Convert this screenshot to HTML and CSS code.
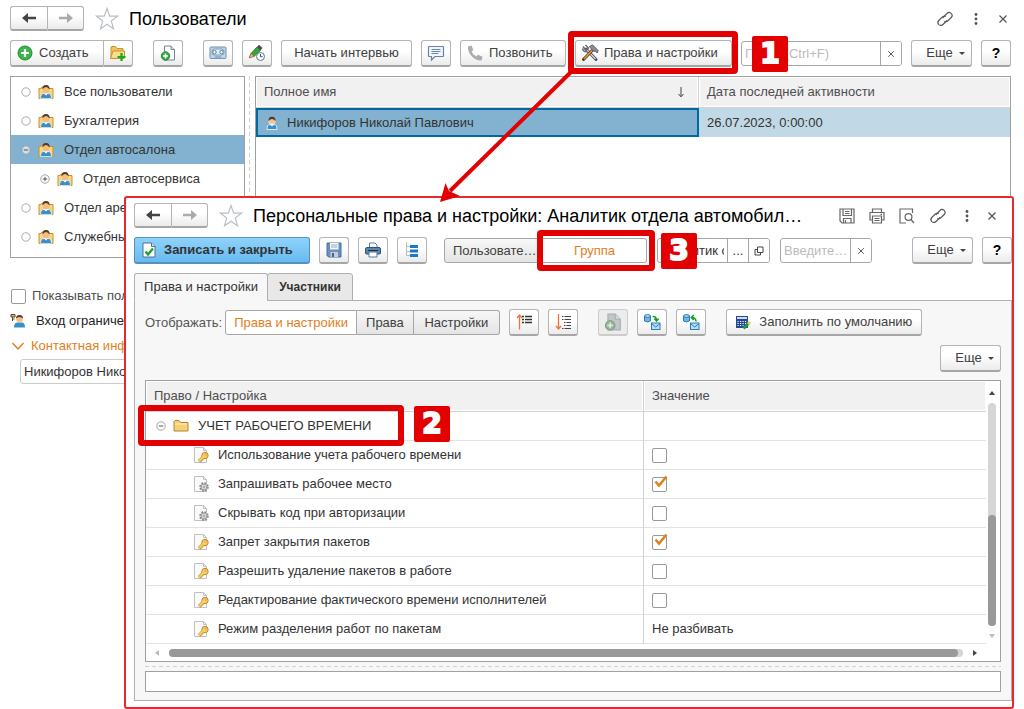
FILE: index.html
```html
<!DOCTYPE html>
<html lang="ru">
<head>
<meta charset="utf-8">
<title>Пользователи</title>
<link rel="stylesheet" href="styles.css">
</head>
<body>
<svg class="sprite" aria-hidden="true">
  <symbol id="i-back" viewBox="0 0 16 12"><path d="M1 6 7 1v3.700h8v2.600H7V11z" fill="currentColor"/></symbol>
  <symbol id="i-fwd" viewBox="0 0 16 12"><path d="M15 6 9 1v3.700H1v2.600h8V11z" fill="currentColor"/></symbol>
  <symbol id="i-star" viewBox="0 0 24 24"><path d="M12 1.500 14.700 9.200H22.500L16.300 14l2.200 7.700L12 17.200l-6.500 4.500L7.700 14 1.500 9.200h7.800z" fill="#fff" stroke="#b9c0c6" stroke-width="1.200"/></symbol>
  <symbol id="i-link" viewBox="0 0 18 18"><g fill="none" stroke="#555" stroke-width="1.200" stroke-linecap="round"><path d="M7 7.500 11 3.500a2.800 2.800 0 0 1 4.200 4l-3.400 3.400a2.700 2.700 0 0 1-3 .6"/><path d="M11 10.500 7 14.500a2.800 2.800 0 0 1-4.200-4l3.400-3.400a2.700 2.700 0 0 1 3-.6" stroke-dasharray="9 1.500 20"/></g></symbol>
  <symbol id="i-dots" viewBox="0 0 4 14"><g fill="#555"><circle cx="2" cy="2.500" r="1.400"/><circle cx="2" cy="7" r="1.400"/><circle cx="2" cy="11.500" r="1.400"/></g></symbol>
  <symbol id="i-x" viewBox="0 0 10 10"><path d="m1.500 1.500 7 7m0-7-7 7" stroke="#555" stroke-width="1.200"/></symbol>
  <symbol id="i-add" viewBox="0 0 16 16"><circle cx="8" cy="8" r="7" fill="#39b54a" stroke="#1f8a36"/><path d="M8 4v8M4 8h8" stroke="#fff" stroke-width="2.200"/></symbol>
  <symbol id="i-folderadd" viewBox="0 0 18 16"><path d="M2 13.500V2.500q0-1 1-1h3.500l1.500 2h6v3" fill="#f3c260" stroke="#c99332"/><path d="M1.500 13.500 4 6h11.500v6l-.5 1.500z" fill="#fbdc8b" stroke="#c99332"/><path d="M12.500 8v8M8.500 12h8" stroke="#10b010" stroke-width="2.200"/></symbol>
  <symbol id="i-docadd" viewBox="0 0 16 16"><path d="M4.500 1H11l3.500 3.500V15h-10z" fill="#fff" stroke="#73859b"/><path d="M11 1v3.500h3.500" fill="#dce5ee" stroke="#73859b"/><circle cx="5.500" cy="11" r="4.200" fill="#39a84a" stroke="#1f8a36"/><path d="M5.500 8.500v5M3 11h5" stroke="#fff" stroke-width="1.500"/></symbol>
  <symbol id="i-docadd-off" viewBox="0 0 16 16"><path d="M3.500 1H10l4.500 4.500V15h-11z" fill="#c3c6c8" stroke="#a9adb0"/><path d="M10 1v4.500h4.500" fill="#dadcdd" stroke="#a9adb0"/><circle cx="5.500" cy="11" r="4.200" fill="#96b29a" stroke="#86a38a"/><path d="M5.500 8.500v5M3 11h5" stroke="#dfe8e0" stroke-width="1.500"/></symbol>
  <symbol id="i-tape" viewBox="0 0 18 14"><rect x="1" y="1" width="16" height="11.500" rx="1" fill="#bcd7ec" stroke="#7492ae"/><rect x="3" y="3" width="12" height="6" rx="2.500" fill="#e1eef8" stroke="#7b9bb5"/><circle cx="5.500" cy="6.200" r="1.700" fill="#fff" stroke="#5c7d9a"/><circle cx="12.500" cy="6.200" r="1.700" fill="#fff" stroke="#5c7d9a"/><path d="M5 12.300 6.500 10h5l1.500 2.300" fill="#8fb2d0"/></symbol>
  <symbol id="i-pencil" viewBox="0 0 18 18"><path d="M1.500 13.500 3 9.500 9 3l3.500 3.500L6.500 12z" fill="#36a53a" stroke="#1e7428" stroke-width=".8"/><path d="m9 3 2-2.200L14.500 4l-2 2.300z" fill="#434a56"/><path d="m1.300 14 1.600-4.400L6.400 12.300z" fill="#f0bd74" stroke="#8d5b26" stroke-width=".6"/><circle cx="12.500" cy="12.500" r="4" fill="#fff" stroke="#5a7690"/><path d="M12.500 10v2.700h2.200" fill="none" stroke="#33526e"/></symbol>
  <symbol id="i-chat" viewBox="0 0 18 16"><path d="M2 1.500h14q.5 0 .5.500v9q0 .5-.5.500H8L4.500 15v-3.500H2q-.5 0-.5-.5V2q0-.5.500-.5z" fill="#f1f7fc" stroke="#6684a3" stroke-width="1.200"/><path d="M4.500 4.500h9M4.500 6.500h9M4.500 8.500h7" stroke="#6d87a0"/></symbol>
  <symbol id="i-phone" viewBox="0 0 16 16"><path d="M1 1.500 4.500.5 6.300 5 4.500 6.500q1.300 3.300 4.700 5L11 9.700l4.500 2-.8 3.600Q9.500 16 5 11.500T1 1.500z" fill="#adadad"/></symbol>
  <symbol id="i-tools" viewBox="0 0 18 18"><path d="M5 5 15 15.500" stroke="#4b4b55" stroke-width="3" stroke-linecap="round"/><path d="m5.500 5.500 9 9.500" stroke="#d3d6dd" stroke-width="1.300"/><path d="M2 2.500 5 6.500 7.500 4 4.500 1M1.500 4.500q1 4 4.500 3" fill="none" stroke="#6c6c78" stroke-width="1.500"/><path d="M2.500 15.500 12 5.500" stroke="#5a3617" stroke-width="3" stroke-linecap="round"/><path d="m3 15 8.500-9" stroke="#e09a4b" stroke-width="1.500"/><path d="M8.500 2.500 11.500.8l5.700 5.700-1 2.500-2-2-1.500.5L10 4.500z" fill="#8d8d9b" stroke="#4a4a55" stroke-width=".8"/></symbol>
  <symbol id="i-group" viewBox="0 0 16 16"><path d="M1 14.500v-10h2l1-1.500h3l1 1.500h7v10z" fill="#f9d587" stroke="#c98f30"/><path d="M2.500 14.500q0-5 3.500-5h4q3.500 0 3.500 5z" fill="#3990c8" stroke="#f4f9fc" stroke-width=".7"/><path d="m6 9.500 2 2 2-2z" fill="#fff"/><circle cx="8" cy="6" r="3.200" fill="#f3bd7c"/><path d="M4.500 5.500Q4 1 8 1q4 0 3.500 4.500Q10 3 8 3T4.500 5.500z" fill="#513a2b"/></symbol>
  <symbol id="i-user" viewBox="0 0 12 14"><path d="M1 13.500Q1 8.500 4 8.500h4q3 0 3 5z" fill="#3990c8" stroke="#e9f4fb" stroke-width=".9"/><path d="m4 8.500 2 2 2-2z" fill="#fff"/><circle cx="6" cy="5" r="3.300" fill="#f3c185" stroke="#e9f4fb" stroke-width=".8"/><path d="M2.500 5.500Q2 1 6 .8q4 .2 3.500 4.700Q8.500 3 6 3T2.500 5.500z" fill="#513a2b"/></symbol>
  <symbol id="i-login" viewBox="0 0 16 16"><path d="M4 14.500q0-5 3.500-5h4q3.500 0 3.500 5z" fill="#3990c8"/><circle cx="9.500" cy="6" r="3.300" fill="#f3c185"/><path d="M6 5.500Q6 2 9.500 2T13 5.500Q11.500 4 9.500 4T6 5.500z" fill="#513a2b"/><path d="M1 1.500h4v2.500H1zM2.500 4v4M2 6h2.500" fill="#d4b872" stroke="#5b4928"/></symbol>
  <symbol id="i-minus" viewBox="0 0 10 10"><circle cx="5" cy="5" r="4.200" fill="#fff" fill-opacity=".6" stroke="#999" stroke-width=".9"/><path d="M2.800 5h4.400" stroke="#555"/></symbol>
  <symbol id="i-plus" viewBox="0 0 10 10"><circle cx="5" cy="5" r="4.200" fill="#fff" stroke="#999" stroke-width=".9"/><path d="M2.800 5h4.400M5 2.800v4.400" stroke="#555"/></symbol>
  <symbol id="i-dot" viewBox="0 0 10 10"><circle cx="5" cy="5" r="4.200" fill="#fff" stroke="#aaa"/></symbol>
  <symbol id="i-savedoc" viewBox="0 0 14 16"><path d="M1 1h8.500L13 4.500V15H1z" fill="#fff" stroke="#4f7391"/><path d="M9.500 1v3.500H13" fill="#d5e4f0" stroke="#4f7391"/><path d="m3.500 9.500 2.500 3 5-6" fill="none" stroke="#18a32c" stroke-width="2.300"/></symbol>
  <symbol id="i-floppy" viewBox="0 0 16 16"><path d="M1 1h14v14H2.500L1 13.500z" fill="#6a90bd" stroke="#4a6f9c"/><path d="M4 1h8.500v6.500H4z" fill="#f4f8fc"/><path d="M5 3h6.500M5 5h6.500" stroke="#94aac2"/><path d="M4.500 10h7.500v5H4.500z" fill="#c6cdd6"/><path d="M6 11h2v4H6z" fill="#3f6491"/></symbol>
  <symbol id="i-printer" viewBox="0 0 16 16"><path d="M4.500 6V1h5.500l2 2v3" fill="#fff" stroke="#5d7a95"/><path d="M2 5.500h12q1.500 0 1.500 1.500v4q0 1-1 1h-13q-1 0-1-1V7Q.5 5.500 2 5.500z" fill="#5d86ac" stroke="#2e5478"/><path d="M3 8.500h10" stroke="#163452"/><path d="M4 10h8v5H4z" fill="#fff" stroke="#5d7a95"/></symbol>
  <symbol id="i-tree" viewBox="0 0 14 16"><path d="M1.500 0v13.500H5M1.500 4.500H5M1.500 9.500H5" fill="none" stroke="#b3bec8"/><g fill="#1c78c8"><rect x="5" y="3" width="8" height="3"/><rect x="5" y="7.500" width="8" height="3"/><rect x="5" y="12" width="8" height="3"/></g></symbol>
  <symbol id="i-osave" viewBox="0 0 16 16"><g fill="none" stroke="#666" stroke-width="1.200"><path d="M1 1h14v14H3l-2-2zM4 1v6.500h8.500V1M6 3.500h4.500M6 5.500h4.500M4.500 15v-4.500H12V15"/><path d="M6.500 12v3"/></g></symbol>
  <symbol id="i-oprint" viewBox="0 0 16 16"><g fill="none" stroke="#666" stroke-width="1.200"><path d="M3.500 4V1h9v3M3.500 12H1V4.500h14V12h-2.500"/><path d="M3.500 8h9v7h-9zM5.500 10.500h5M5.500 12.500h5M11.500 6.300h1.500"/></g></symbol>
  <symbol id="i-opreview" viewBox="0 0 16 16"><g fill="none" stroke="#666" stroke-width="1.200"><path d="M7 15H1V1h12.500v4"/><circle cx="9.500" cy="9" r="3.400"/><path d="m12 11.500 3 3.500"/></g></symbol>
  <symbol id="i-open" viewBox="0 0 10 10"><path d="M3.500 1h5.500v5.500H3.500zM3.500 3.500H1V9h5.500V6.500" fill="none" stroke="#444"/></symbol>
  <symbol id="i-up" viewBox="0 0 18 18"><path d="M4.500 16.500V2.500M2 5l2.500-3L7 5" fill="none" stroke="#f0743a" stroke-width="1.300"/><path d="M8 4.500h2M8 7.500h2M11 4.500h7M11 7.500h7M8 1.500h2M11 1.500h7" transform="translate(-1 2)" stroke="#333" stroke-width="1.300"/></symbol>
  <symbol id="i-down" viewBox="0 0 18 18"><path d="M4.500 1v14.500M2 13l2.500 3L7 13" fill="none" stroke="#f0743a" stroke-width="1.300"/><path d="M8 3.500h1.500M10.500 3.500H17M8 6.500h1.500M10.500 6.500H17M10 9.500h1.500M12.500 9.500H17M10 12.500h1.500M12.500 12.500H17M8 15.500h1.500M10.500 15.500H17" stroke="#444" stroke-width="1.200"/></symbol>
  <symbol id="i-dbdown" viewBox="0 0 18 18"><path d="M1.500 3v5q3 1.800 6 0V3" fill="#6db8e6" stroke="#2c7bb5"/><ellipse cx="4.500" cy="3" rx="3" ry="1.400" fill="#b0dcf6" stroke="#2c7bb5"/><path d="M9.500 3.500q4-.5 4 4M11.300 5.500l2.200 2.500 2.200-2.500" fill="none" stroke="#12a022" stroke-width="1.500"/><rect x="8.500" y="10" width="8.500" height="6.500" fill="#b5dff8" stroke="#2c7bb5"/><path d="m8.500 10.500 4.200 3.500 4.300-3.500" fill="none" stroke="#2c7bb5"/></symbol>
  <symbol id="i-dbup" viewBox="0 0 18 18"><path d="M1.500 3v5q3 1.800 6 0V3" fill="#6db8e6" stroke="#2c7bb5"/><ellipse cx="4.500" cy="3" rx="3" ry="1.400" fill="#b0dcf6" stroke="#2c7bb5"/><path d="M14 8.500q0-4-4.500-4M11.800 2 9.300 4.500 11.800 7" fill="none" stroke="#12a022" stroke-width="1.500"/><rect x="8.500" y="10" width="8.500" height="6.500" fill="#b5dff8" stroke="#2c7bb5"/><path d="m8.500 10.500 4.200 3.500 4.300-3.500" fill="none" stroke="#2c7bb5"/></symbol>
  <symbol id="i-calc" viewBox="0 0 16 16"><rect x="1" y="2" width="12" height="12" fill="#24499a"/><path d="M2 4h10" stroke="#fff" stroke-width="1.600"/><path d="M2.500 7.500h9M2.500 9.500h9M2.500 11.500h6" stroke="#fff" stroke-dasharray="1.200 1.300"/><path d="m8.500 14.500 5-5" stroke="#1c9a35" stroke-width="2.800"/><path d="m13 10 2-2" stroke="#f2cc38" stroke-width="2.800"/></symbol>
  <symbol id="i-folder" viewBox="0 0 16 14"><path d="M1 12V2.500L2 1.500h4l1.500 2H15V12z" fill="#f6d177" stroke="#ae8535"/><path d="M2 5h12" stroke="#fff1bd"/></symbol>
  <symbol id="i-key" viewBox="0 0 16 16"><path d="M1.500.5h9l3 3v12h-12z" fill="#fafafa" stroke="#c0c0c0"/><path d="M10.500.5v3h3" fill="none" stroke="#c0c0c0"/><path d="m6 14.500 5-5" stroke="#c7892a" stroke-width="3.600"/><circle cx="12" cy="8.500" r="3.200" fill="#f8cf5e" stroke="#c7892a"/><path d="m6 14.300 5-5" stroke="#f8cf5e" stroke-width="2.200"/><circle cx="13" cy="7.500" r=".9" fill="#fff" stroke="#a66f1e" stroke-width=".5"/></symbol>
  <symbol id="i-gear" viewBox="0 0 16 16"><path d="M1.500.5h9l3 3v12h-12z" fill="#fafafa" stroke="#c0c0c0"/><path d="M10.500.5v3h3" fill="none" stroke="#c0c0c0"/><circle cx="11" cy="11" r="3.900" fill="#ddd" stroke="#888" stroke-width="1.800" stroke-dasharray="1.700 1.360"/><circle cx="11" cy="11" r="2.900" fill="#e6e6e6" stroke="#999"/><circle cx="11" cy="11" r="1" fill="#fff" stroke="#777" stroke-width=".7"/></symbol>
  <symbol id="i-check" viewBox="0 0 14 13"><path d="M1.500 6.500 5 10.500 12.500 1.500" fill="none" stroke="#e0801c" stroke-width="2.500"/></symbol>
</svg>

<main class="page">
  <header class="titlebar">
    <div class="group nav">
      <button class="btn" aria-label="Назад"><svg class="arrow"><use href="#i-back"/></svg></button>
      <button class="btn off" aria-label="Вперед"><svg class="arrow"><use href="#i-fwd"/></svg></button>
    </div>
    <svg class="star"><use href="#i-star"/></svg>
    <h1>Пользователи</h1>
    <div class="wintools">
      <svg class="i18"><use href="#i-link"/></svg>
      <svg class="dots"><use href="#i-dots"/></svg>
      <svg class="i10"><use href="#i-x"/></svg>
    </div>
  </header>

  <div class="toolbar">
    <div class="group">
      <button class="btn create"><svg class="i16"><use href="#i-add"/></svg>Создать</button>
      <button class="btn sq"><svg class="i18"><use href="#i-folderadd"/></svg></button>
    </div>
    <button class="btn sq apart" aria-label="Добавить"><svg class="i16"><use href="#i-docadd"/></svg></button>
    <button class="btn sq apart" aria-label="Запись"><svg class="i18"><use href="#i-tape"/></svg></button>
    <button class="btn sq" aria-label="Изменить"><svg class="i18"><use href="#i-pencil"/></svg></button>
    <button class="btn interview">Начать интервью</button>
    <button class="btn sq" aria-label="Сообщение"><svg class="i18"><use href="#i-chat"/></svg></button>
    <button class="btn call"><svg class="i16"><use href="#i-phone"/></svg>Позвонить</button>
    <div class="marked">
      <button class="btn rights"><svg class="i18"><use href="#i-tools"/></svg>Права и настройки</button>
      <span class="frame"></span>
      <span class="badge side-1">1</span>
    </div>
    <div class="field search">
      <input type="text" placeholder="Поиск (Ctrl+F)" aria-label="Поиск">
      <button aria-label="Очистить"><svg class="i8"><use href="#i-x"/></svg></button>
    </div>
    <button class="btn more">Еще<i class="caret"></i></button>
    <button class="btn sq help">?</button>
  </div>

  <div class="columns">
    <aside class="side">
      <ul class="tree">
        <li><svg class="i10"><use href="#i-dot"/></svg><svg class="i16"><use href="#i-group"/></svg>Все пользователи</li>
        <li><svg class="i10"><use href="#i-dot"/></svg><svg class="i16"><use href="#i-group"/></svg>Бухгалтерия</li>
        <li class="selected"><svg class="i10"><use href="#i-minus"/></svg><svg class="i16"><use href="#i-group"/></svg>Отдел автосалона</li>
        <li class="child"><svg class="i10"><use href="#i-plus"/></svg><svg class="i16"><use href="#i-group"/></svg>Отдел автосервиса</li>
        <li><svg class="i10"><use href="#i-dot"/></svg><svg class="i16"><use href="#i-group"/></svg>Отдел аренды</li>
        <li><svg class="i10"><use href="#i-dot"/></svg><svg class="i16"><use href="#i-group"/></svg>Служебные</li>
      </ul>
      <div class="details">
        <label class="show"><input class="box" type="checkbox">Показывать пользователей</label>
        <div class="login"><svg class="i16"><use href="#i-login"/></svg>Вход ограничен</div>
        <a class="contacts" href="#"><svg viewBox="0 0 14 10"><path d="m1.500 2 5.500 6 5.500-6" fill="none" stroke="#e0801c" stroke-width="1.500"/></svg>Контактная информация</a>
        <input class="person" type="text" value="Никифоров Николай" aria-label="Пользователь">
      </div>
    </aside>
    <div class="splitter"></div>
    <div class="userlist">
      <table class="users">
        <thead><tr><th class="name"><div>Полное имя<svg class="sort" viewBox="0 0 8 12"><path d="M4 1v9.500M1.500 8 4 10.800 6.500 8" fill="none" stroke="#444"/></svg></div></th><th>Дата последней активности</th></tr></thead>
        <tbody><tr><td class="current"><div><svg class="user"><use href="#i-user"/></svg>Никифоров Николай Павлович</div></td><td>26.07.2023, 0:00:00</td></tr></tbody>
      </table>
    </div>
  </div>
</main>

<section class="window">
  <header class="titlebar">
    <div class="group nav">
      <button class="btn" aria-label="Назад"><svg class="arrow"><use href="#i-back"/></svg></button>
      <button class="btn off" aria-label="Вперед"><svg class="arrow"><use href="#i-fwd"/></svg></button>
    </div>
    <svg class="star"><use href="#i-star"/></svg>
    <h2>Персональные права и настройки: Аналитик отдела автомобил…</h2>
    <div class="wintools">
      <svg class="i16"><use href="#i-osave"/></svg>
      <svg class="i16"><use href="#i-oprint"/></svg>
      <svg class="i16"><use href="#i-opreview"/></svg>
      <svg class="i18"><use href="#i-link"/></svg>
      <svg class="dots"><use href="#i-dots"/></svg>
      <svg class="i10"><use href="#i-x"/></svg>
    </div>
  </header>

  <div class="toolbar">
    <button class="btn save"><svg class="i16"><use href="#i-savedoc"/></svg>Записать и закрыть</button>
    <button class="btn sq" aria-label="Записать"><svg class="i16"><use href="#i-floppy"/></svg></button>
    <button class="btn sq" aria-label="Печать"><svg class="i16"><use href="#i-printer"/></svg></button>
    <button class="btn sq" aria-label="Структура"><svg class="i16"><use href="#i-tree"/></svg></button>
    <div class="group seg kind">
      <button class="btn user-kind">Пользовате…</button>
      <div class="marked">
        <button class="btn on group-kind">Группа</button>
        <span class="frame"></span>
        <span class="badge side-3">3</span>
      </div>
    </div>
    <div class="field owner">
      <input type="text" value="Аналитик отдела" aria-label="Группа">
      <button>...</button>
      <button aria-label="Открыть"><svg class="i10"><use href="#i-open"/></svg></button>
    </div>
    <div class="field find">
      <input type="text" placeholder="Введите…" aria-label="Найти">
      <button aria-label="Очистить"><svg class="i8"><use href="#i-x"/></svg></button>
    </div>
    <button class="btn more">Еще<i class="caret"></i></button>
    <button class="btn sq help">?</button>
  </div>

  <div class="tabs" role="tablist">
    <button class="tab active" role="tab">Права и настройки</button>
    <button class="tab" role="tab">Участники</button>
  </div>

  <div class="panel">
    <div class="filters">
      <span class="caption">Отображать:</span>
      <div class="group seg">
        <button class="btn on wide">Права и настройки</button>
        <button class="btn">Права</button>
        <button class="btn roomy">Настройки</button>
      </div>
      <button class="btn sq" aria-label="Свернуть"><svg class="i18"><use href="#i-up"/></svg></button>
      <button class="btn sq" aria-label="Развернуть"><svg class="i18"><use href="#i-down"/></svg></button>
      <button class="btn sq apart" disabled aria-label="Добавить"><svg class="i18"><use href="#i-docadd-off"/></svg></button>
      <button class="btn sq" aria-label="Выгрузить"><svg class="i18"><use href="#i-dbdown"/></svg></button>
      <button class="btn sq" aria-label="Загрузить"><svg class="i18"><use href="#i-dbup"/></svg></button>
      <button class="btn apart fill"><svg class="i16"><use href="#i-calc"/></svg>Заполнить по умолчанию</button>
    </div>
    <button class="btn more">Еще<i class="caret"></i></button>

    <div class="grid">
      <table class="settings">
        <thead><tr><th class="name">Право / Настройка</th><th>Значение</th></tr></thead>
        <tbody>
          <tr><td><div class="folder"><svg class="i10"><use href="#i-minus"/></svg><svg class="i16"><use href="#i-folder"/></svg>УЧЕТ РАБОЧЕГО ВРЕМЕНИ<span class="frame"></span><span class="badge side-2">2</span></div></td><td></td></tr>
          <tr><td><div class="item"><svg class="i16"><use href="#i-key"/></svg><label for="c1">Использование учета рабочего времени</label></div></td><td><span class="check"><input class="box" id="c1" type="checkbox"></span></td></tr>
          <tr><td><div class="item"><svg class="i16"><use href="#i-gear"/></svg><label for="c2">Запрашивать рабочее место</label></div></td><td><span class="check"><input class="box" id="c2" type="checkbox" checked><svg><use href="#i-check"/></svg></span></td></tr>
          <tr><td><div class="item"><svg class="i16"><use href="#i-gear"/></svg><label for="c3">Скрывать код при авторизации</label></div></td><td><span class="check"><input class="box" id="c3" type="checkbox"></span></td></tr>
          <tr><td><div class="item"><svg class="i16"><use href="#i-key"/></svg><label for="c4">Запрет закрытия пакетов</label></div></td><td><span class="check"><input class="box" id="c4" type="checkbox" checked><svg><use href="#i-check"/></svg></span></td></tr>
          <tr><td><div class="item"><svg class="i16"><use href="#i-key"/></svg><label for="c5">Разрешить удаление пакетов в работе</label></div></td><td><span class="check"><input class="box" id="c5" type="checkbox"></span></td></tr>
          <tr><td><div class="item"><svg class="i16"><use href="#i-key"/></svg><label for="c6">Редактирование фактического времени исполнителей</label></div></td><td><span class="check"><input class="box" id="c6" type="checkbox"></span></td></tr>
          <tr><td><div class="item"><svg class="i16"><use href="#i-key"/></svg>Режим разделения работ по пакетам</div></td><td>Не разбивать</td></tr>
        </tbody>
      </table>
      <div class="vscroll"><i class="tri up"></i><div class="track"><div class="thumb"></div></div><i class="tri down"></i></div>
      <div class="hscroll"><i class="tri left"></i><div class="track"><div class="thumb"></div></div><i class="tri right"></i></div>
    </div>
    <div class="hsplit"></div>
    <input class="comment" type="text" aria-label="Описание">
  </div>
</section>

<svg class="pointer" viewBox="0 0 136 134" aria-hidden="true"><path d="M133 2 12 121" stroke="#e20000" stroke-width="4"/><path d="M2 132 7.500 113 11 121 22 126z" fill="#e20000"/></svg>
</body>
</html>
```
FILE: styles.css
```css
* { box-sizing: border-box; }
body {
  position: relative;
  margin: 0;
  min-height: 100vh;
  background: #fff;
  color: #333;
  font: 13px/16px "Liberation Sans", Arial, sans-serif;
  white-space: nowrap;
}
button, input { font: inherit; color: inherit; }
svg { flex: none; display: block; }
.sprite { position: absolute; width: 0; height: 0; }
.i8 { width: 8px; height: 8px; }
.i10 { width: 10px; height: 10px; }
.i16 { width: 16px; height: 16px; }
.i18 { width: 18px; height: 18px; }
.page { padding: 6px 13px 0 10px; }

/* title row */
.titlebar { display: flex; align-items: center; height: 25px; }
h1, h2 { margin: 0 0 0 10px; font-size: 18px; line-height: 24px; font-weight: 400; color: #000; }
h2 { flex: 0 1 auto; overflow: hidden; text-overflow: ellipsis; }
.star { width: 24px; height: 24px; margin-left: 11px; }
.arrow { width: 16px; height: 12px; color: #444; }
.off .arrow { color: #aaa; }
.nav { height: 25px; }
.nav .btn { width: 37px; height: 25px; padding: 0; }
.wintools { display: flex; align-items: center; margin-left: auto; }
.wintools .dots { width: 4px; height: 14px; }
.page .wintools { gap: 20px; padding-right: 3px; }
.window .wintools { gap: 14px; padding-right: 15px; }
.window .dots { margin: 0 4px; }

/* buttons */
.btn {
  display: flex;
  align-items: center;
  justify-content: center;
  flex: none;
  height: 27px;
  padding: 0 13px;
  border: 1px solid #b4b4b4;
  border-bottom: 2px solid #a6a6a6;
  border-radius: 3px;
  background: linear-gradient(#fff 40%, #ebebeb);
  color: #404040;
}
.btn:disabled { background: #ececec; border-color: #ccc; }
.sq { width: 30px; padding: 0; }
.help { color: #000; font-weight: 700; font-size: 14px; }
.more { width: 61px; padding: 0 0 0 8px; }
.caret { margin-left: 6px; border: 3px solid transparent; border-top-color: #444; border-bottom: 0; }
.group { display: flex; flex: none; }
.group > .btn:first-child { border-right-width: 0; border-radius: 3px 0 0 3px; }
.group > .btn:last-child { border-radius: 0 3px 3px 0; }
.toolbar { display: flex; align-items: center; gap: 9px; height: 27px; margin-top: 9px; }
.apart { margin-left: 11px; }
.create { width: 93px; padding: 0 0 0 6px; gap: 6px; justify-content: flex-start; }
.interview { width: 131px; }
.call { width: 106px; gap: 6px; padding: 0 0 0 6px; justify-content: flex-start; }
.rights { width: 157px; gap: 5px; padding: 0 0 0 5px; justify-content: flex-start; }

/* text fields with buttons */
.field {
  display: flex;
  height: 25px;
  border: 1px solid #a6a6a6;
  border-radius: 3px;
  background: #fff;
  overflow: hidden;
}
.field input { flex: 1; width: 0; min-width: 0; padding: 0 3px; border: 0; background: none; outline: 0; }
.field input::placeholder { color: #bbb; opacity: 1; }
.field button {
  display: flex;
  align-items: center;
  justify-content: center;
  width: 21px;
  padding: 0;
  border: 0;
  border-left: 1px solid #a6a6a6;
  background: #fff;
}
.search { flex: 1; min-width: 100px; }

/* call-outs */
.marked { position: relative; flex: none; }
.frame {
  position: absolute;
  inset: -9px -6px -7px -7px;
  border: 6px solid #e20000;
  border-radius: 4px;
  z-index: 3;
  pointer-events: none;
}
.badge {
  position: absolute;
  z-index: 3;
  width: 36px;
  height: 36px;
  border-radius: 2px;
  background: #e20000;
  color: #fff;
  font: 700 28px/36px "DejaVu Sans", sans-serif;
  -webkit-text-stroke: 2px #fff;
  text-align: center;
}
.side-1 { left: calc(100% + 20px); top: -4px; }
.side-2 { left: 260px; top: -7px; }
.side-3 { left: calc(100% + 14px); top: -5px; }
.pointer { position: absolute; left: 438px; top: 70px; width: 136px; height: 134px; z-index: 4; pointer-events: none; }

/* left side */
.columns { display: flex; margin-top: 9px; }
.side { flex: none; width: 235px; }
.tree { margin: 0; padding: 0 0 6px; list-style: none; border: 1px solid #a0a0a0; }
.tree li { display: flex; align-items: center; height: 29px; padding-left: 10px; gap: 7px; }
.tree .i16 { margin-right: 3px; }
.tree .child { padding-left: 29px; }
.tree .selected { background: #82b2cf; }
.box {
  appearance: none;
  display: block;
  flex: none;
  width: 15px;
  height: 15px;
  margin: 0;
  border: 1px solid #999;
  border-radius: 2px;
  background: #fff;
}
.details { width: 114px; overflow: hidden; }
.show { display: flex; align-items: center; gap: 6px; height: 20px; margin: 28px 0 0 1px; color: #4d4d4d; }
.login { display: flex; align-items: center; gap: 10px; height: 20px; margin-top: 5px; color: #222; }
.contacts { display: flex; align-items: center; gap: 6px; height: 20px; margin: 5px 0 0 1px; color: #e0801c; text-decoration: none; }
.contacts svg { width: 14px; height: 10px; }
.person { display: block; width: 225px; height: 25px; margin: 3px 0 0 10px; padding: 0 3px; border: 1px solid #ccc; border-radius: 3px; }
.splitter { flex: none; width: 10px; }
.splitter::before { content: ""; display: block; width: 1px; height: 130px; margin-left: 4px; background: repeating-linear-gradient(#d0d0d0 0 4px, transparent 4px 7px); }

/* user list */
.userlist { flex: 1; height: 240px; border: 1px solid #a0a0a0; }
table { width: 100%; border-collapse: separate; border-spacing: 0; table-layout: fixed; }
th { height: 31px; padding: 0 8px; border: solid #d2d2d2; border-width: 0 0 1px; background: #f1f1f1; color: #4d4d4d; font-weight: 400; text-align: left; box-shadow: inset 0 0 0 1px #fff; }
th.name { border-right-width: 1px; }
td { height: 29px; padding: 0 8px; }
.users th.name { width: 443px; }
.users div { display: flex; align-items: center; }
.sort { width: 8px; height: 12px; margin: 0 5px 0 auto; }
.users td { background: #c1d8e6; }
.users .current { padding: 0 8px; border: 2px solid #0069a2; background: #82b2cf; }
.user { width: 12px; height: 14px; margin-right: 9px; }

/* inner window */
.window {
  position: absolute;
  z-index: 2;
  top: 196px;
  left: 124px;
  right: 10px;
  padding: 5px 0 6px 8px;
  border: 2px solid #e6292c;
  border-radius: 3px;
  background: #fff;
}
.save { width: 176px; gap: 7px; padding: 0 0 0 6px; justify-content: flex-start; border-color: #5592ba; background: linear-gradient(#8fd2fb, #68baf0); color: #333; font-weight: 700; }
.seg .btn { height: 25px; padding: 0 9px; border: 1px solid #a6a6a6; border-left-width: 0; border-radius: 0; background: linear-gradient(#f7f7f7, #e4e4e4); }
.group.seg > .btn:first-child { border-left-width: 1px; border-right-width: 1px; border-radius: 3px 0 0 3px; }
.group.seg > .btn:last-child { border-radius: 0 3px 3px 0; }
.seg .btn.on { background: #fff; color: #e0801c; }
.seg .wide { width: 132px; }
.seg .roomy { width: 86px; }
.kind { margin-left: 8px; }
.seg .user-kind { width: 99px; padding: 0 8px; justify-content: flex-start; }
.seg .group-kind { width: 104px; border-radius: 0 3px 3px 0; }
.kind .frame { inset: -8px -8px -8px -6px; }
.owner { width: 113px; margin-left: 1px; }
.find { width: 92px; margin-left: 1px; }
.window .toolbar .more { margin-left: auto; }
.tabs { display: flex; margin-top: 9px; height: 28px; position: relative; z-index: 1; }
.tab { width: 86px; height: 28px; padding: 0; border: 1px solid #b0b0b0; background: #e8e8e8; font-weight: 700; font-size: 12px; color: #333; border-radius: 3px 3px 0 0; }
.tab + .tab { margin-left: -1px; }
.tab.active { width: 134px; background: #f7f7f7; border-bottom-color: #f7f7f7; font-weight: 400; font-size: 13px; }
.panel { margin-top: -1px; padding: 8px 10px 8px 10px; border: 1px solid #b0b0b0; background: #f7f7f7; }
.filters { display: flex; align-items: center; gap: 9px; }
.caption { margin-right: -6px; color: #555; }
.fill { width: 196px; padding: 0; gap: 8px; }
.panel > .more { margin: 9px 0 8px auto; }
.grid { display: grid; grid-template-columns: 1fr 14px; border: 1px solid #a0a0a0; background: #fff; }
.settings th.name { width: 498px; }
.settings td { border-bottom: 1px solid #e2e2e2; }
.settings td:first-child { border-right: 1px solid #d2d2d2; }
.settings td > div { display: flex; align-items: center; }
.item { padding-left: 39px; gap: 9px; }
.folder { position: relative; height: 26px; padding-left: 2px; gap: 7px; }
.folder .i16 { margin-right: 2px; }
.folder .frame { inset: -8px auto auto -16px; width: 266px; height: 41px; }
.check { position: relative; display: block; width: 15px; }
.check svg { position: absolute; left: 2px; top: -2px; width: 14px; height: 13px; pointer-events: none; }
.vscroll { display: flex; flex-direction: column; align-items: center; gap: 8px; padding: 10px 2px 6px 0; }
.track { display: flex; background: #d6d6d6; border-radius: 4px; }
.thumb { background: #999; border-radius: 4px; }
.vscroll .track { flex: 1; width: 8px; align-items: flex-end; }
.vscroll .thumb { width: 8px; height: 50%; }
.hscroll { grid-column: 1 / -1; display: flex; align-items: center; gap: 10px; height: 17px; padding: 0 23px 0 9px; }
.hscroll .track { flex: 1; height: 8px; }
.hscroll .thumb { width: calc(100% - 5px); height: 8px; }
.tri { width: 0; height: 0; border: 3px solid transparent; }
.tri.up { border-top: 0; border-bottom: 4px solid #444; }
.tri.down { border-bottom: 0; border-top: 4px solid #bbb; }
.tri.left { border-left: 0; border-right: 4px solid #bbb; }
.tri.right { border-right: 0; border-left: 4px solid #444; }
.hsplit { height: 1px; margin: 4px 0; background: repeating-linear-gradient(90deg, #d0d0d0 0 4px, transparent 4px 7px); }
.comment { display: block; width: 100%; height: 21px; border: 1px solid #a0a0a0; background: #fff; }
```
